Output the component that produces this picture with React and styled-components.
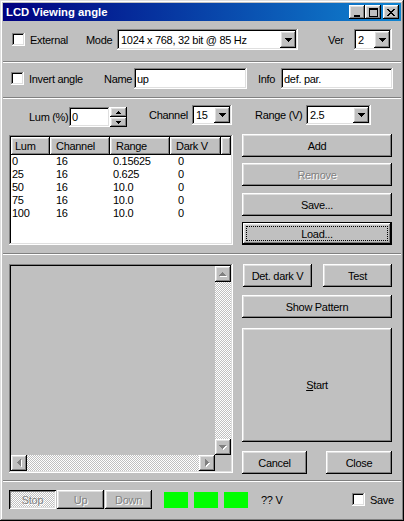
import React from 'react'
import styled, { createGlobalStyle, css } from 'styled-components'

const GlobalStyle = createGlobalStyle`
  html, body {
    margin: 0;
    padding: 0;
    background: #c0c0c0;
  }
  body {
    font-family: "Liberation Sans", Arial, sans-serif;
    font-size: 11px;
    letter-spacing: -0.3px;
    color: #000;
  }
  * { box-sizing: border-box; }
`

const raised = css`
  background-color: #c0c0c0;
  box-shadow: inset -1px -1px #000, inset 1px 1px #fff, inset -2px -2px #808080, inset 2px 2px #dfdfdf;
`

const sunken = css`
  box-shadow: inset -1px -1px #fff, inset 1px 1px #808080, inset -2px -2px #dfdfdf, inset 2px 2px #000;
`

const dither = css`
  background-color: #c0c0c0;
  background-image: conic-gradient(#fff 25%, #c0c0c0 0 50%, #fff 0 75%, #c0c0c0 0);
  background-size: 2px 2px;
`

const Window = styled.div`
  width: 404px;
  height: 521px;
  padding: 3px;
  background: #c0c0c0;
  box-shadow: inset -1px -1px #000, inset 1px 1px #dfdfdf, inset -2px -2px #808080, inset 2px 2px #fff;
  display: flex;
  flex-direction: column;
  overflow: hidden;
`

const TitleBar = styled.div`
  height: 18px;
  flex-shrink: 0;
  display: flex;
  align-items: center;
  padding: 0 2px 0 3px;
  background: linear-gradient(90deg, #000080, #1084d0);
  color: #fff;
  font-weight: bold;
  font-size: 11.3px;
  letter-spacing: 0;
`

const TitleText = styled.span`
  flex: 1;
`

const TitleButton = styled.div`
  ${raised};
  width: 16px;
  height: 14px;
  margin-left: ${p => p.$ml || 0}px;
  display: flex;
  align-items: center;
  justify-content: center;
`

const Section = styled.div`
  flex-shrink: 0;
  height: ${p => p.$h}px;
  padding: ${p => p.$pt || 0}px 0 0 ${p => p.$pl || 0}px;
`

const Separator = styled.div`
  flex-shrink: 0;
  height: 2px;
  border-top: 1px solid #808080;
  border-bottom: 1px solid #fff;
`

const Row = styled.div`
  display: flex;
  align-items: ${p => p.$align || 'center'};
  height: ${p => p.$h ? p.$h + 'px' : 'auto'};
  margin-top: ${p => p.$mt || 0}px;
`

const Label = styled.span`
  flex-shrink: 0;
  white-space: nowrap;
  width: ${p => p.$w ? p.$w + 'px' : 'auto'};
  margin-left: ${p => p.$ml || 0}px;
  line-height: ${p => p.$lh ? p.$lh + 'px' : 'normal'};
`

const CheckBox = styled.span`
  flex-shrink: 0;
  width: 13px;
  height: 13px;
  background: #fff;
  ${sunken};
  margin-left: ${p => p.$ml || 0}px;
`

const TextField = styled.div`
  ${sunken};
  background: #fff;
  flex-shrink: 0;
  width: ${p => p.$w}px;
  height: ${p => p.$h || 21}px;
  margin-top: ${p => p.$mt || 0}px;
  padding: 0 3px;
  display: flex;
  align-items: center;
`

const Combo = styled.div`
  ${sunken};
  background: #fff;
  flex-shrink: 0;
  width: ${p => p.$w}px;
  height: ${p => p.$h || 21}px;
  padding: 2px;
  display: flex;
`

const ComboValue = styled.span`
  flex: 1;
  padding-left: 2px;
  display: flex;
  align-items: center;
  white-space: nowrap;
  overflow: hidden;
`

const DropButton = styled.span`
  ${raised};
  width: 16px;
  display: flex;
  align-items: center;
  justify-content: center;
`

const Spinner = styled.div`
  flex-shrink: 0;
  width: 17px;
  height: 20px;
  margin-top: 2px;
  display: flex;
  flex-direction: column;
`

const SpinHalf = styled.span`
  ${raised};
  flex: 1;
  display: flex;
  align-items: center;
  justify-content: center;
`

const MainRow = styled.div`
  display: flex;
  margin-top: ${p => p.$mt || 0}px;
`

const ListView = styled.div`
  ${sunken};
  background: #fff;
  width: 224px;
  height: 110px;
  margin-top: 1px;
  padding: 2px;
`

const HeaderRow = styled.div`
  display: flex;
  height: 18px;
`

const HeaderCell = styled.div`
  ${raised};
  flex: ${p => p.$w ? `0 0 ${p.$w}px` : 1};
  padding-left: ${p => p.$pl || 6}px;
  display: flex;
  align-items: center;
`

const DataRow = styled.div`
  display: grid;
  grid-template-columns: 44px 57px 65px 1fr;
  padding-left: 1px;
  height: 13px;
  line-height: 13px;
`

const ButtonColumn = styled.div`
  width: 150px;
  margin-left: ${p => p.$ml || 0}px;
  display: flex;
  flex-direction: column;
`

const Button = styled.div`
  ${raised};
  flex-shrink: 0;
  position: relative;
  width: ${p => p.$w ? p.$w + 'px' : '100%'};
  height: ${p => p.$h || 23}px;
  margin-top: ${p => p.$mt || 0}px;
  margin-left: ${p => p.$ml || 0}px;
  display: flex;
  align-items: center;
  justify-content: center;
  color: ${p => p.$disabled ? '#808080' : '#000'};
  text-shadow: ${p => p.$disabled ? '1px 1px #fff' : 'none'};
  ${p => p.$default && css`
    box-shadow: inset 0 0 0 1px #000, inset -2px -2px #000, inset 2px 2px #fff, inset -3px -3px #808080, inset 3px 3px #dfdfdf;
    &::after {
      content: '';
      position: absolute;
      inset: 4px;
      border: 1px dotted #000;
    }
  `}
  ${p => p.$pressed && css`
    ${dither};
    box-shadow: inset 1px 1px #000, inset -1px -1px #fff, inset 2px 2px #808080, inset -2px -2px #dfdfdf;
  `}
`

const ButtonPair = styled.div`
  display: flex;
  justify-content: space-between;
  margin-top: ${p => p.$mt || 0}px;
`

const ScrollArea = styled.div`
  ${sunken};
  background-color: #c0c0c0;
  width: 224px;
  height: 209px;
  padding: 2px;
  display: grid;
  grid-template-columns: 1fr 16px;
  grid-template-rows: 1fr 16px;
`

const ScrollTrack = styled.div`
  ${dither};
  display: flex;
  flex-direction: ${p => p.$vertical ? 'column' : 'row'};
  justify-content: space-between;
`

const ScrollButton = styled.div`
  ${raised};
  width: 16px;
  height: 16px;
  display: flex;
  align-items: center;
  justify-content: center;
`

const Indicator = styled.span`
  flex-shrink: 0;
  width: 24px;
  height: 16px;
  background: #00ff00;
  margin-left: ${p => p.$ml || 0}px;
`

function Tri({ dir = 'down', n = 4, color = '#000', shadow = false }) {
  const len = n * 2 - 1
  const horiz = dir === 'left' || dir === 'right'
  const w = horiz ? n : len
  const h = horiz ? len : n
  const cells = []
  for (let i = 0; i < n; i++) {
    const l = len - i * 2
    if (dir === 'down') cells.push([i, i, l, 1])
    if (dir === 'up') cells.push([i, n - 1 - i, l, 1])
    if (dir === 'right') cells.push([i, i, 1, l])
    if (dir === 'left') cells.push([n - 1 - i, i, 1, l])
  }
  const s = shadow ? 1 : 0
  return (
    <svg width={w + s} height={h + s} style={{ display: 'block' }} shapeRendering="crispEdges">
      {shadow && cells.map((c, k) => (
        <rect key={'s' + k} x={c[0] + 1} y={c[1] + 1} width={c[2]} height={c[3]} fill="#fff" />
      ))}
      {cells.map((c, k) => (
        <rect key={k} x={c[0]} y={c[1]} width={c[2]} height={c[3]} fill={color} />
      ))}
    </svg>
  )
}

const MinGlyph = () => (
  <svg width="8" height="9" shapeRendering="crispEdges" style={{ display: 'block' }}>
    <rect x="1" y="7" width="6" height="2" fill="#000" />
  </svg>
)

const MaxGlyph = () => (
  <svg width="9" height="9" shapeRendering="crispEdges" style={{ display: 'block' }}>
    <rect x="0" y="0" width="9" height="2" fill="#000" />
    <rect x="0" y="0" width="1" height="9" fill="#000" />
    <rect x="8" y="0" width="1" height="9" fill="#000" />
    <rect x="0" y="8" width="9" height="1" fill="#000" />
  </svg>
)

const closeRows = [
  [[0, 2], [6, 2]],
  [[1, 2], [5, 2]],
  [[2, 4]],
  [[3, 2]],
  [[2, 4]],
  [[1, 2], [5, 2]],
  [[0, 2], [6, 2]],
]

const CloseGlyph = () => (
  <svg width="8" height="7" shapeRendering="crispEdges" style={{ display: 'block' }}>
    {closeRows.map((segs, y) => segs.map(([x, w], k) => (
      <rect key={y + '-' + k} x={x} y={y} width={w} height="1" fill="#000" />
    )))}
  </svg>
)

const DropDown = ({ w, h, value }) => (
  <Combo $w={w} $h={h}>
    <ComboValue>{value}</ComboValue>
    <DropButton><Tri dir="down" /></DropButton>
  </Combo>
)

const rows = [
  ['0', '16', '0.15625', '0'],
  ['25', '16', '0.625', '0'],
  ['50', '16', '10.0', '0'],
  ['75', '16', '10.0', '0'],
  ['100', '16', '10.0', '0'],
]

export default function App() {
  return (
    <>
      <GlobalStyle />
      <Window>
        <TitleBar>
          <TitleText>LCD Viewing angle</TitleText>
          <TitleButton><MinGlyph /></TitleButton>
          <TitleButton><MaxGlyph /></TitleButton>
          <TitleButton $ml={2}><CloseGlyph /></TitleButton>
        </TitleBar>

        <Section $h={40} $pt={8}>
          <Row $h={21}>
            <CheckBox $ml={9} />
            <Label $ml={5} $w={56}>External</Label>
            <Label $w={31}>Mode</Label>
            <DropDown w={181} value="1024 x 768, 32 bit @ 85 Hz" />
            <Label $ml={30} $w={26}>Ver</Label>
            <DropDown w={38} value="2" />
          </Row>
        </Section>
        <Separator />

        <Section $h={34} $pt={5}>
          <Row $h={21}>
            <CheckBox $ml={8} />
            <Label $ml={5} $w={75}>Invert angle</Label>
            <Label $w={30}>Name</Label>
            <TextField $w={113}>up</TextField>
            <Label $ml={11} $w={23}>Info</Label>
            <TextField $w={112}>def. par.</TextField>
          </Row>
        </Section>
        <Separator />

        <Section $h={154} $pt={6} $pl={6}>
          <Row $h={22} $align="flex-start">
            <Label $ml={20} $w={40} $lh={24}>Lum (%)</Label>
            <TextField $w={41} $h={20} $mt={2}>0</TextField>
            <Spinner>
              <SpinHalf><Tri dir="up" n={3} /></SpinHalf>
              <SpinHalf><Tri dir="down" n={3} /></SpinHalf>
            </Spinner>
            <Label $ml={22} $w={43} $lh={20}>Channel</Label>
            <DropDown w={40} h={20} value="15" />
            <Label $ml={23} $w={51} $lh={20}>Range (V)</Label>
            <DropDown w={65} h={20} value="2.5" />
          </Row>
          <MainRow $mt={7}>
            <ListView>
              <HeaderRow>
                <HeaderCell $w={39} $pl={4}>Lum</HeaderCell>
                <HeaderCell $w={60}>Channel</HeaderCell>
                <HeaderCell $w={60}>Range</HeaderCell>
                <HeaderCell $w={51}>Dark V</HeaderCell>
                <HeaderCell />
              </HeaderRow>
              {rows.map(r => (
                <DataRow key={r[0]}>
                  {r.map((c, i) => <span key={i}>{c}</span>)}
                </DataRow>
              ))}
            </ListView>
            <ButtonColumn $ml={9}>
              <Button>Add</Button>
              <Button $mt={6} $disabled>Remove</Button>
              <Button $mt={7}>Save...</Button>
              <Button $mt={6} $default>Load...</Button>
            </ButtonColumn>
          </MainRow>
        </Section>
        <Separator />

        <Section $h={225} $pt={9} $pl={6}>
          <MainRow>
            <ScrollArea>
              <div />
              <ScrollTrack $vertical>
                <ScrollButton><Tri dir="up" color="#808080" shadow /></ScrollButton>
                <ScrollButton><Tri dir="down" color="#808080" shadow /></ScrollButton>
              </ScrollTrack>
              <ScrollTrack>
                <ScrollButton><Tri dir="left" color="#808080" shadow /></ScrollButton>
                <ScrollButton><Tri dir="right" color="#808080" shadow /></ScrollButton>
              </ScrollTrack>
              <div />
            </ScrollArea>
            <ButtonColumn $ml={9}>
              <ButtonPair>
                <Button $w={69} $ml={1}>Det. dark V</Button>
                <Button $w={69}>Test</Button>
              </ButtonPair>
              <Button $mt={8}>Show Pattern</Button>
              <Button $mt={10} $h={114}><span><u>S</u>tart</span></Button>
              <ButtonPair $mt={9}>
                <Button $w={65}>Cancel</Button>
                <Button $w={66}>Close</Button>
              </ButtonPair>
            </ButtonColumn>
          </MainRow>
        </Section>
        <Separator />

        <Section $h={36} $pt={8} $pl={6}>
          <Row $h={19}>
            <Button $w={47} $h={19} $pressed $disabled>Stop</Button>
            <Button $w={47} $h={19} $ml={1} $disabled>Up</Button>
            <Button $w={47} $h={19} $ml={1} $disabled>Down</Button>
            <Indicator $ml={12} />
            <Indicator $ml={6} />
            <Indicator $ml={6} />
            <Label $ml={13} $w={91}>?? V</Label>
            <CheckBox />
            <Label $ml={5}>Save</Label>
          </Row>
        </Section>
      </Window>
    </>
  )
}
